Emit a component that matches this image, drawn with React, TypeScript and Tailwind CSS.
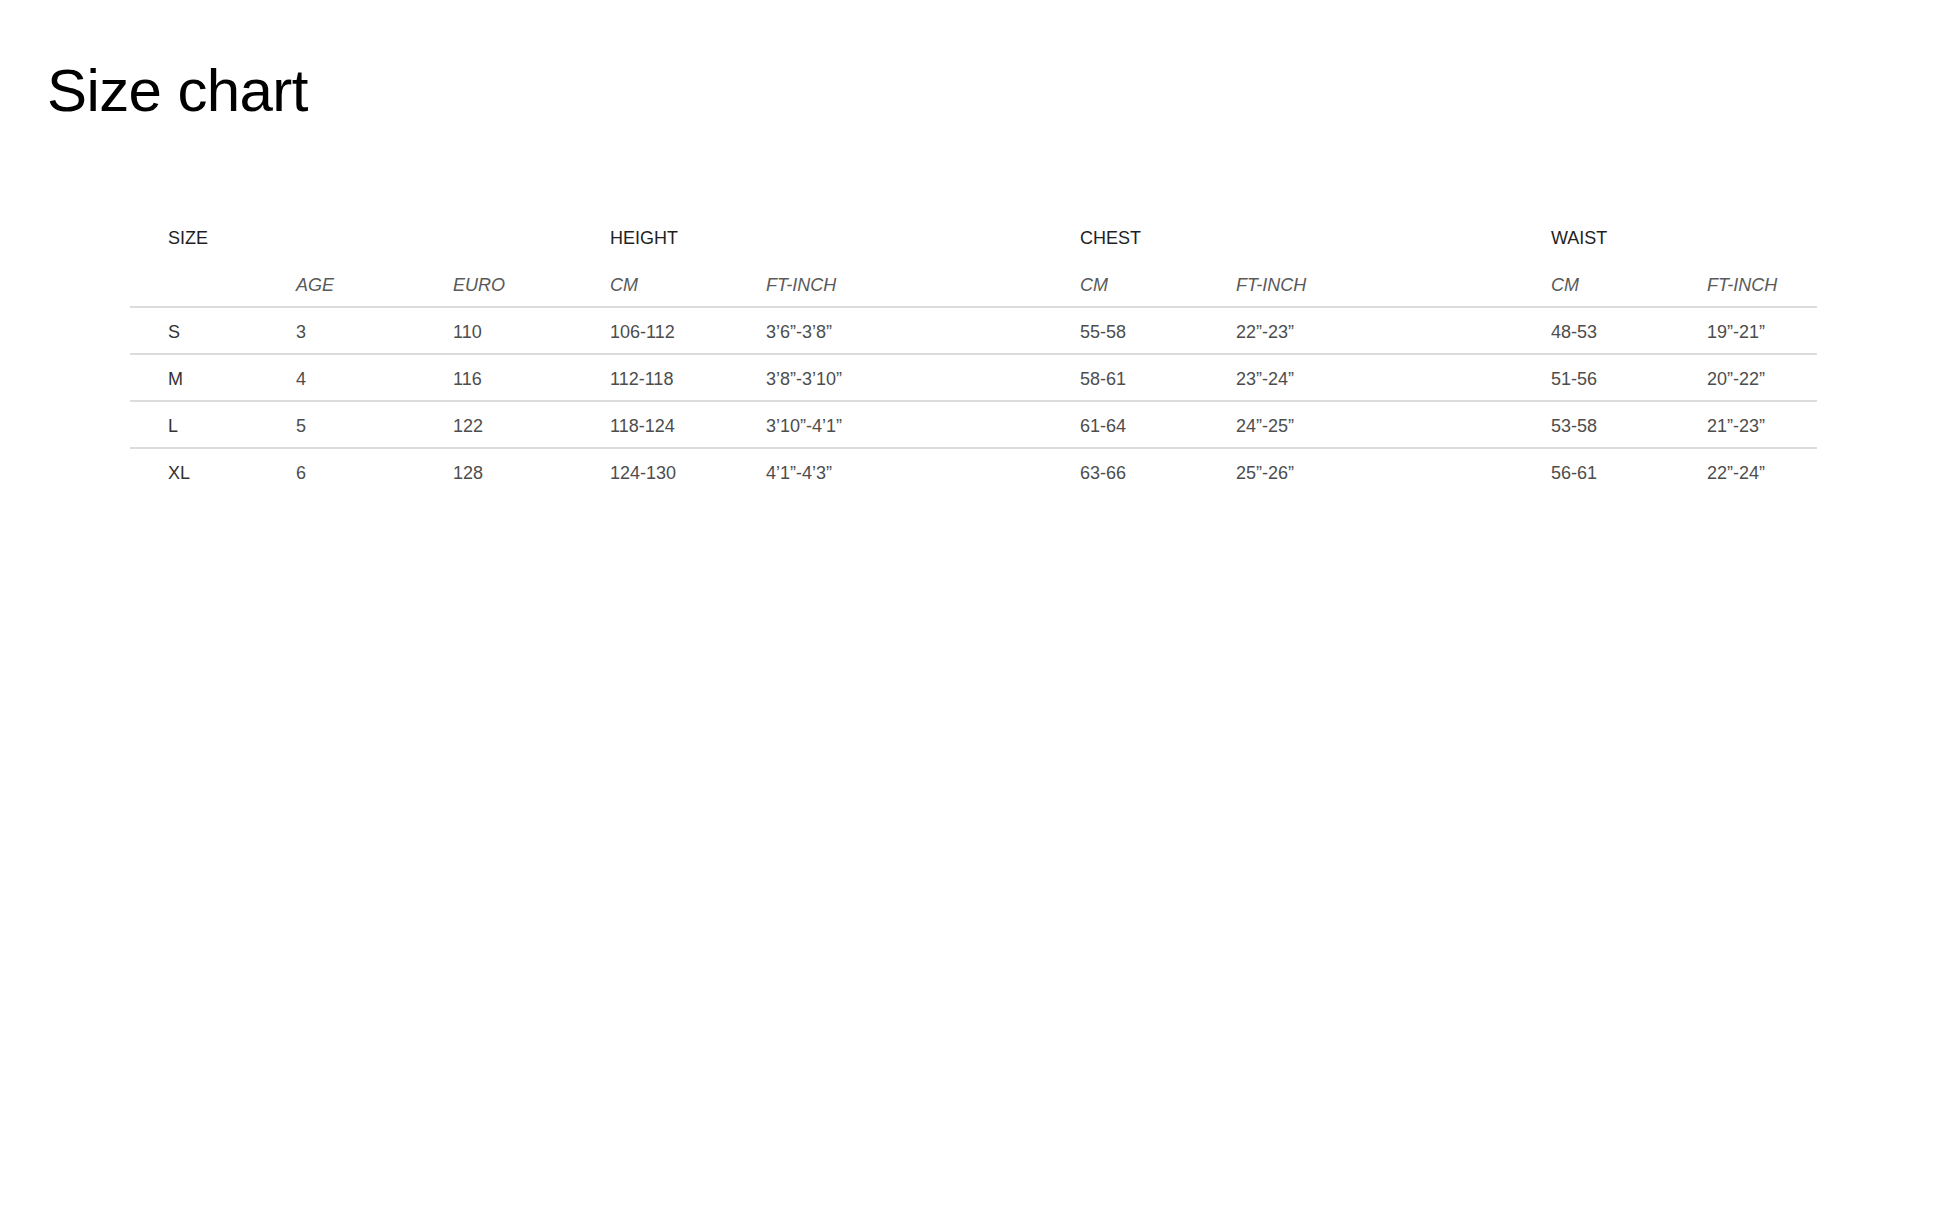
import React from "react";

const cols =
  "grid grid-cols-[166px_157px_157px_156px_314px_156px_315px_156px_110px]";

const rows = [
  ["S", "3", "110", "106-112", "3’6”-3’8”", "55-58", "22”-23”", "48-53", "19”-21”"],
  ["M", "4", "116", "112-118", "3’8”-3’10”", "58-61", "23”-24”", "51-56", "20”-22”"],
  ["L", "5", "122", "118-124", "3’10”-4’1”", "61-64", "24”-25”", "53-58", "21”-23”"],
  ["XL", "6", "128", "124-130", "4’1”-4’3”", "63-66", "25”-26”", "56-61", "22”-24”"],
];

export default function App() {
  return (
    <div
      className="min-h-[1226px] w-full bg-white pl-[47px] pt-[61px]"
      style={{ fontFamily: '"Liberation Sans", Arial, sans-serif' }}
    >
      <h1 className="text-[60px] leading-none font-normal tracking-[-0.01em] text-black">
        Size chart
      </h1>

      <div className="ml-[83px] mt-[94px] w-[1687px]">
        {/* group headers */}
        <div className={`${cols} h-[47px] items-center text-[18px] text-[#1f1f1f]`}>
          <div className="pl-[38px]">SIZE</div>
          <div />
          <div />
          <div>HEIGHT</div>
          <div />
          <div>CHEST</div>
          <div />
          <div>WAIST</div>
          <div />
        </div>
        {/* sub headers */}
        <div className={`${cols} h-[44px] items-center pt-[2px] text-[18px] italic text-[#5a5a5a]`}>
          <div />
          <div>AGE</div>
          <div>EURO</div>
          <div>CM</div>
          <div>FT-INCH</div>
          <div>CM</div>
          <div>FT-INCH</div>
          <div>CM</div>
          <div>FT-INCH</div>
        </div>
        {rows.map((r) => (
          <div
            key={r[0]}
            className={`${cols} h-[47px] items-center border-t-2 border-[#dcdcdc] pt-1 text-[18px] text-[#4d4d4d]`}
          >
            {r.map((c, i) => (
              <div key={i} className={i === 0 ? "pl-[38px] text-[#333333]" : ""}>
                {c}
              </div>
            ))}
          </div>
        ))}
      </div>
    </div>
  );
}
